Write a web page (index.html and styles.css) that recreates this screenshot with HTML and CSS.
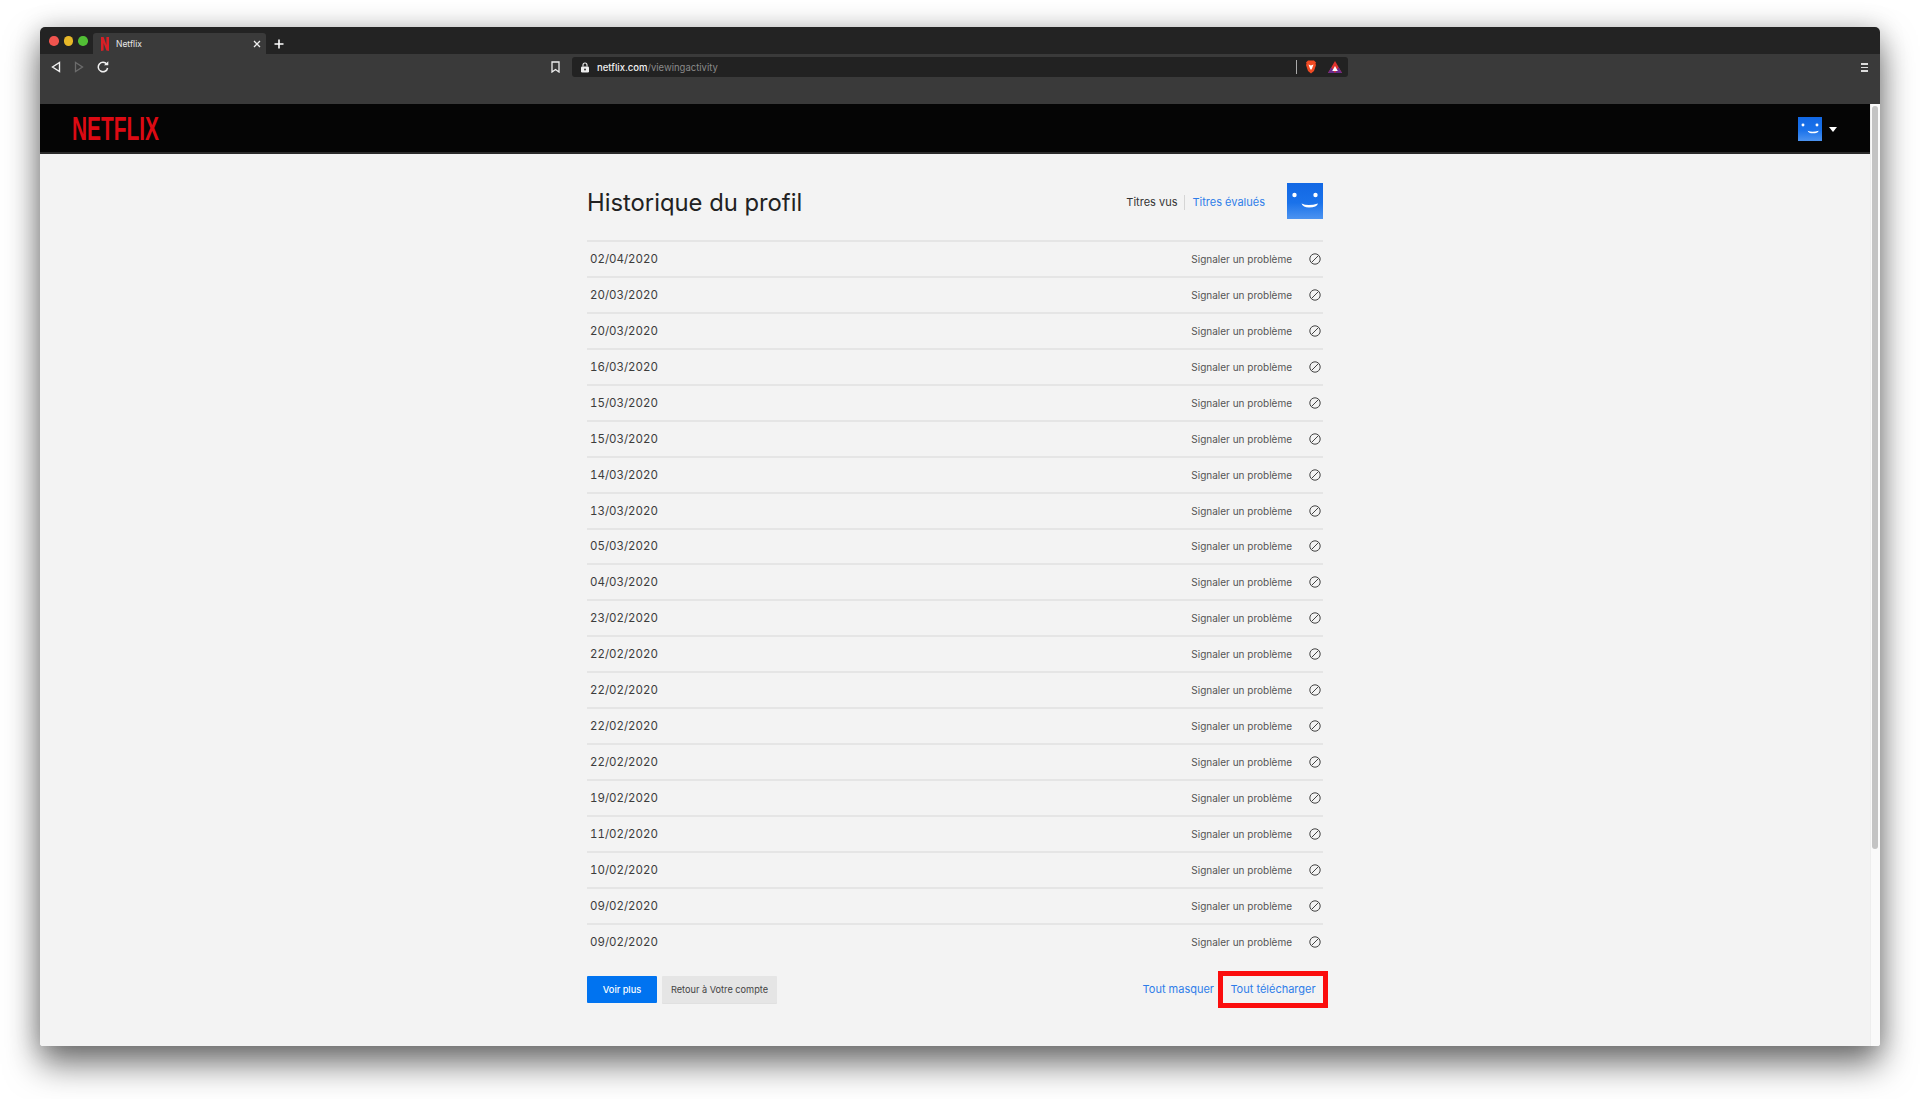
FILE: index.html
```html
<!DOCTYPE html>
<html lang="fr">
<head>
<meta charset="utf-8">
<title>Netflix</title>
<link rel="stylesheet" href="styles.css">
</head>
<body>
<svg class="defs" width="0" height="0" aria-hidden="true">
  <symbol id="ban" viewBox="0 0 12 12"><circle cx="6" cy="6" r="5.200" fill="none" stroke="#444" stroke-width="1"/><path d="M2.500 9.500L9.500 2.500" stroke="#444" stroke-width="1"/></symbol>
  <symbol id="face" viewBox="0 0 36 36"><defs><linearGradient id="fg" x1="0" y1="0" x2="0" y2="1"><stop offset="0" stop-color="#1268e4"/><stop offset="0.55" stop-color="#1a72ea"/><stop offset="1" stop-color="#4c93f0"/></linearGradient></defs><rect width="36" height="36" fill="url(#fg)"/><circle cx="7.500" cy="12" r="2.200" fill="#fff"/><circle cx="28.500" cy="12" r="2.200" fill="#fff"/><path d="M14.500 20.500Q21 23.500 31 20.500Q30 24.500 22 24.500Q16 24.500 14.500 20.500Z" fill="#fff"/></symbol>
</svg>
<div class="window">
  <div class="tabbar">
    <div class="lights"><span class="light red"></span><span class="light yellow"></span><span class="light green"></span></div>
    <div class="tab">
      <svg class="favicon" viewBox="0 0 8 14"><path d="M0 0h2.600l2.800 8V0H8v14l-2.600-.4L2.600 6v7.600L0 14z" fill="#d81f26"/></svg>
      <span class="tab-title">Netflix</span>
      <svg class="tab-close" viewBox="0 0 8 8"><path d="M1 1l6 6M7 1L1 7" stroke="#eee" stroke-width="1.300"/></svg>
    </div>
    <svg class="tab-new" viewBox="0 0 10 10"><path d="M5 .5v9M.5 5h9" stroke="#fff" stroke-width="1.600"/></svg>
  </div>
  <div class="toolbar">
    <div class="nav">
      <svg class="nav-icon" viewBox="0 0 10 12"><path d="M8.500 1.500v9L1.500 6z" fill="none" stroke="#f0f0f0" stroke-width="1.400"/></svg>
      <svg class="nav-icon" viewBox="0 0 10 12"><path d="M1.500 1.500v9l7-4.500z" fill="none" stroke="#6c6c6c" stroke-width="1.300"/></svg>
      <svg class="reload" viewBox="0 0 12 12"><path d="M9.800 3.300A4.700 4.700 0 1 0 10.600 7" fill="none" stroke="#f0f0f0" stroke-width="1.500"/><path d="M7 4.300h4.300V.3z" fill="#f0f0f0"/></svg>
    </div>
    <svg class="bookmark" viewBox="0 0 9 12"><path d="M1 1h7v10L4.500 8.500 1 11z" fill="none" stroke="#eee" stroke-width="1.300"/></svg>
    <div class="urlbar">
      <svg class="lock" viewBox="0 0 10 11"><rect x="1" y="4.500" width="8" height="6" rx="1.200" fill="#eee"/><path d="M3 4.500V3a2 2 0 0 1 4 0v1.500" fill="none" stroke="#eee" stroke-width="1.100"/><circle cx="5" cy="7.500" r="1" fill="#333"/></svg>
      <span class="url"><span class="url-host">netflix.com</span>/viewingactivity</span>
      <span class="url-sep"></span>
      <svg class="brave" viewBox="0 0 12 14"><path d="M3 .5h6l2 2-.5 1 .5 1.500L9 11l-3 2.500L3 11 1 5l.5-1.500L1 2.500z" fill="#f04a23"/><path d="M3.500 4.500l2.500 1 2.500-1L7 8.500l-1 1.500-1-1.500z" fill="#fff"/></svg>
      <svg class="bat" viewBox="0 0 14 12"><path d="M7 0l7 12H0z" fill="#e0332f"/><path d="M0 12l3.500-6L7 12z" fill="#6a2b8c"/><path d="M14 12l-3.500-6L7 12z" fill="#6a2b8c"/><path d="M7 5l2.800 5H4.200z" fill="#fff"/></svg>
    </div>
    <div class="menu"><span></span><span></span><span></span></div>
  </div>
  <div class="viewport">
    <div class="page">
      <header class="site-header">
        <span class="logo">NETFLIX</span>
        <div class="account">
          <svg class="avatar-small"><use href="#face"/></svg>
          <span class="caret"></span>
        </div>
      </header>
      <main class="content">
        <div class="head">
          <h1 class="title">Historique du profil</h1>
          <div class="tabs">
            <span class="tab-link current">Titres vus</span>
            <span class="tab-link active">Titres évalués</span>
          </div>
          <svg class="avatar"><use href="#face"/></svg>
        </div>
        <ul class="rows">
          <li class="row"><span class="date">02/04/2020</span><span class="report">Signaler un problème</span><svg class="ban"><use href="#ban"/></svg></li>
          <li class="row"><span class="date">20/03/2020</span><span class="report">Signaler un problème</span><svg class="ban"><use href="#ban"/></svg></li>
          <li class="row"><span class="date">20/03/2020</span><span class="report">Signaler un problème</span><svg class="ban"><use href="#ban"/></svg></li>
          <li class="row"><span class="date">16/03/2020</span><span class="report">Signaler un problème</span><svg class="ban"><use href="#ban"/></svg></li>
          <li class="row"><span class="date">15/03/2020</span><span class="report">Signaler un problème</span><svg class="ban"><use href="#ban"/></svg></li>
          <li class="row"><span class="date">15/03/2020</span><span class="report">Signaler un problème</span><svg class="ban"><use href="#ban"/></svg></li>
          <li class="row"><span class="date">14/03/2020</span><span class="report">Signaler un problème</span><svg class="ban"><use href="#ban"/></svg></li>
          <li class="row"><span class="date">13/03/2020</span><span class="report">Signaler un problème</span><svg class="ban"><use href="#ban"/></svg></li>
          <li class="row"><span class="date">05/03/2020</span><span class="report">Signaler un problème</span><svg class="ban"><use href="#ban"/></svg></li>
          <li class="row"><span class="date">04/03/2020</span><span class="report">Signaler un problème</span><svg class="ban"><use href="#ban"/></svg></li>
          <li class="row"><span class="date">23/02/2020</span><span class="report">Signaler un problème</span><svg class="ban"><use href="#ban"/></svg></li>
          <li class="row"><span class="date">22/02/2020</span><span class="report">Signaler un problème</span><svg class="ban"><use href="#ban"/></svg></li>
          <li class="row"><span class="date">22/02/2020</span><span class="report">Signaler un problème</span><svg class="ban"><use href="#ban"/></svg></li>
          <li class="row"><span class="date">22/02/2020</span><span class="report">Signaler un problème</span><svg class="ban"><use href="#ban"/></svg></li>
          <li class="row"><span class="date">22/02/2020</span><span class="report">Signaler un problème</span><svg class="ban"><use href="#ban"/></svg></li>
          <li class="row"><span class="date">19/02/2020</span><span class="report">Signaler un problème</span><svg class="ban"><use href="#ban"/></svg></li>
          <li class="row"><span class="date">11/02/2020</span><span class="report">Signaler un problème</span><svg class="ban"><use href="#ban"/></svg></li>
          <li class="row"><span class="date">10/02/2020</span><span class="report">Signaler un problème</span><svg class="ban"><use href="#ban"/></svg></li>
          <li class="row"><span class="date">09/02/2020</span><span class="report">Signaler un problème</span><svg class="ban"><use href="#ban"/></svg></li>
          <li class="row"><span class="date">09/02/2020</span><span class="report">Signaler un problème</span><svg class="ban"><use href="#ban"/></svg></li>
        </ul>
        <div class="actions">
          <a class="btn btn-primary">Voir plus</a>
          <a class="btn btn-secondary">Retour à Votre compte</a>
          <a class="link hide-all">Tout masquer</a>
          <a class="link download">Tout télécharger</a>
        </div>
      </main>
    </div>
    <div class="scrollbar"><div class="thumb"></div></div>
  </div>
</div>
</body>
</html>
```
FILE: styles.css
```css
* { box-sizing: border-box; }
html, body { margin: 0; height: 100%; }
body { background: #fff; overflow: hidden; font-family: Inter, "Liberation Sans", sans-serif; padding: 27px 40px 0; }
.defs { position: absolute; }

.window { height: 1019px; display: flex; flex-direction: column; border-radius: 5px 5px 3px 3px; overflow: hidden; box-shadow: 0 18px 34px rgba(0,0,0,.55), 0 0 26px rgba(0,0,0,.18); }

.tabbar { height: 27px; background: #232323; display: flex; align-items: flex-end; padding-left: 9px; flex: none; }
.lights { display: flex; gap: 5px; align-self: flex-start; padding-top: 9px; width: 44px; }
.light { width: 9.5px; height: 9.5px; border-radius: 50%; }
.red { background: #f0544e; }
.yellow { background: #e8b828; }
.green { background: #52bf35; }
.tab { width: 173px; height: 21px; background: #3a3a3a; border-radius: 3px 3px 0 0; display: flex; align-items: center; padding: 0 5px 0 8px; }
.favicon { width: 8px; height: 14px; flex: none; }
.tab-title { color: #e8e8e8; font-size: 8.5px; margin-left: 7px; flex: 1; }
.tab-close { width: 8px; height: 8px; flex: none; margin-top: 1px; }
.tab-new { width: 10px; height: 10px; margin: 0 0 5px 8px; flex: none; }

.toolbar { height: 50px; background: #3a3a3a; display: flex; align-items: flex-start; padding-top: 3px; flex: none; }
.nav { display: flex; align-items: center; height: 20px; width: 511px; padding-left: 11px; gap: 13px; }
.nav-icon { width: 10px; height: 12px; flex: none; }
.reload { width: 12px; height: 12px; flex: none; }
.bookmark { width: 9px; height: 12px; margin-top: 4px; flex: none; }
.urlbar { width: 776px; height: 20px; margin-left: 12px; background: #222; border-radius: 3px; display: flex; align-items: center; padding-left: 8px; }
.lock { width: 10px; height: 11px; flex: none; }
.url { font-size: 9.5px; color: #8a8a8a; margin-left: 7px; flex: 1; }
.url-host { color: #f0f0f0; font-weight: 500; }
.url-sep { width: 1px; height: 14px; background: #aaa; }
.brave { width: 12px; height: 14px; margin-left: 8px; flex: none; }
.bat { width: 14px; height: 12px; margin-left: 11px; margin-right: 6px; flex: none; }
.menu { margin-left: auto; margin-right: 12px; display: flex; flex-direction: column; gap: 2px; padding-top: 6px; }
.menu span { display: block; width: 7px; height: 1.5px; background: #ddd; }

.viewport { flex: 1; display: flex; min-height: 0; background: #f3f3f3; }
.page { flex: 1; min-width: 0; }
.site-header { height: 50px; background: #050505; border-bottom: 2px solid #2a2a2a; display: flex; align-items: center; padding: 0 33px 0 32px; }
.logo { font-family: "Liberation Sans", sans-serif; font-weight: 700; font-size: 33px; line-height: 34px; margin-top: 2px; color: #dc0a13; transform: scaleX(.633); transform-origin: left center; flex: none; }
.account { margin-left: auto; margin-top: 2px; display: flex; align-items: center; }
.avatar-small { width: 24px; height: 24px; }
.caret { width: 0; height: 0; border: 4.5px solid transparent; border-top: 5px solid #fff; border-bottom: 0; margin-left: 7px; }

.content { width: 736px; margin: 0 auto; padding-top: 29px; }
.head { display: flex; align-items: center; height: 36px; margin-bottom: 21px; }
.title { font-size: 23.8px; font-weight: 400; color: #222; margin: 0; padding-top: 2px; flex: 1; }
.tabs { display: flex; align-items: center; margin: 2px 22px 0 0; }
.tab-link { font-size: 11px; line-height: 15px; }
.current { color: #333; padding-right: 7px; border-right: 1px solid #d5d5d5; }
.active { color: #2e7de9; padding-left: 7px; }
.avatar { width: 36px; height: 36px; flex: none; }

.rows { list-style: none; margin: 0; padding: 0; }
.row { height: 35.95px; border-top: 2px solid #e5e5e5; display: flex; align-items: center; padding: 0 2px 0 3px; }
.date { font-size: 11.5px; color: #3c3c3c; flex: 1; font-variant-numeric: tabular-nums; }
.report { font-size: 10px; color: #555; }
.ban { width: 12px; height: 12px; margin-left: 17px; flex: none; }

.actions { display: flex; align-items: center; margin-top: 17px; height: 27px; }
.btn { height: 27px; display: flex; align-items: center; justify-content: center; font-size: 9.2px; border-radius: 1px; }
.btn-primary { width: 70px; background: #0073f0; color: #fff; font-weight: 500; }
.btn-secondary { width: 115px; margin-left: 5px; background: #e5e5e5; color: #444; box-shadow: 0 1px 0 rgba(0,0,0,.08); }
.link { font-size: 11px; color: #2e7de9; }
.hide-all { margin-left: auto; margin-right: 4px; }
.download { border: 5px solid #fb0d0d; height: 37px; width: 110px; display: flex; align-items: center; justify-content: center; margin-right: -5px; }

.scrollbar { width: 10px; flex: none; background: #fafafa; border-left: 1px solid #eee; padding: 2px 2px 0 1px; }
.thumb { height: 743px; border-radius: 3px; background: #c4c4c4; }
```
